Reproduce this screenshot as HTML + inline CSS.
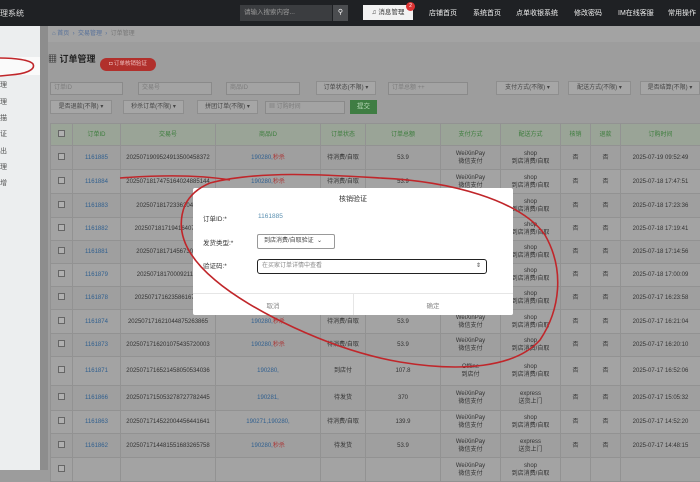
<!DOCTYPE html>
<html><head><meta charset="utf-8"><style>
*{box-sizing:border-box;margin:0;padding:0}
body{width:700px;height:470px;overflow:hidden;position:relative;background:#9c9c9c;font-family:"Liberation Sans","Noto Sans CJK SC",sans-serif;font-size:7px;color:#333}
.top{position:absolute;left:0;top:0;width:700px;height:26px;background:#1f2124;color:#ddd;overflow:hidden}
.top .n{position:absolute;top:8px;font-size:7px;color:#eee;white-space:nowrap}
.abs{position:absolute}
.side{position:absolute;left:0;top:26px;width:40px;height:444px;background:#eceeef}
.side div{position:absolute;left:0;font-size:7px;color:#555}
.main{position:absolute;left:40px;top:26px;width:660px;height:444px;background:#9d9d9d}
.inp{position:absolute;height:13px;border:1px solid #8a8a8a;background:#a3a3a3;color:#7c7c7c;font-size:6px;padding-left:3px;line-height:11px;white-space:nowrap;overflow:hidden}
.sel{position:absolute;height:14px;border:1px solid #8e8e8e;background:#a6a6a6;color:#444;font-size:6px;text-align:center;line-height:12px;white-space:nowrap;overflow:hidden}
table{position:absolute;left:50px;top:123px;border-collapse:collapse;table-layout:fixed;width:650px}
td,th{border:1px solid #929292;text-align:center;font-size:6px;line-height:8px;overflow:hidden;white-space:nowrap;font-weight:normal}
th{background:#9aa497;color:#3c7d3c;height:22px}
tr:nth-child(odd) td{background:#a3a3a3}
tr:nth-child(even) td{background:#9f9f9f}
td{color:#333}
.b{color:#2f5f8f}.r{color:#a33}
.cb{display:inline-block;width:7px;height:7px;border:1px solid #666;background:#b0b0b0}
.modal{position:absolute;left:193px;top:188px;width:320px;height:127px;background:#fff;border-radius:2px}
.modal .l{position:absolute;left:10px;font-size:6.5px;color:#333}
</style></head><body>
<div class="top">
<div class="abs" style="left:0;top:8px;font-size:8px;color:#ddd">理系统</div>
<div class="abs" style="left:240px;top:5px;width:92px;height:16px;background:#3b3d40;color:#999;font-size:6.5px;line-height:16px;padding-left:4px">请输入搜索内容...</div>
<div class="abs" style="left:333px;top:5px;width:15px;height:16px;background:#4b4d50;color:#fff;font-size:7px;line-height:16px;text-align:center">⚲</div>
<div class="abs" style="left:363px;top:5px;width:50px;height:15px;background:#f2f2f2;color:#333;font-size:6.5px;line-height:15px;text-align:center">♫ 消息管理</div>
<div class="abs" style="left:406px;top:2px;width:9px;height:9px;border-radius:50%;background:#d33;color:#fff;font-size:5px;line-height:9px;text-align:center">2</div>
<div class="n" style="left:429px">店铺首页</div>
<div class="n" style="left:473px">系统首页</div>
<div class="n" style="left:516px">点单收银系统</div>
<div class="n" style="left:574px">修改密码</div>
<div class="n" style="left:618px">IM在线客服</div>
<div class="n" style="left:668px">常用操作</div>
</div>
<div class="side">
<div style="top:31px;width:40px;height:18px;background:#fafafa"></div>
<div style="top:54px">理</div><div style="top:71px">理</div><div style="top:87px">描</div><div style="top:103px">证</div><div style="top:120px">出</div><div style="top:136px">理</div><div style="top:152px">增</div>
</div>
<div class="main">
<div class="abs" style="left:0;top:0;width:8px;height:444px;background:#8d8d8d"></div>
<div class="abs" style="left:8px;top:0;width:652px;height:16px;background:#a3a3a3;font-size:6px;color:#56709a;line-height:16px;padding-left:4px">⌂ 首页 &nbsp;›&nbsp; 交易管理 &nbsp;›&nbsp; <span style="color:#777">订单管理</span></div>
<div class="abs" style="left:8px;top:26px;font-size:9px;color:#222;font-weight:bold">▦ 订单管理</div>
<div class="abs" style="left:60px;top:32px;width:56px;height:13px;border-radius:7px;background:#b1302c;color:#f0c0c0;font-size:5.5px;line-height:13px;text-align:center">◘ 订单核销验证</div>
</div>
<div class="inp" style="left:50px;top:82px;width:73px">订单ID</div>
<div class="inp" style="left:138px;top:82px;width:74px">交易号</div>
<div class="inp" style="left:226px;top:82px;width:74px">商品ID</div>
<div class="sel" style="left:316px;top:81px;width:60px">订单状态(不限) ▾</div>
<div class="inp" style="left:388px;top:82px;width:80px">订单总额 ++</div>
<div class="sel" style="left:496px;top:81px;width:63px">支付方式(不限) ▾</div>
<div class="sel" style="left:568px;top:81px;width:63px">配送方式(不限) ▾</div>
<div class="sel" style="left:640px;top:81px;width:60px">是否结算(不限) ▾</div>
<div class="sel" style="left:50px;top:100px;width:62px">是否退款(不限) ▾</div>
<div class="sel" style="left:123px;top:100px;width:61px">秒杀订单(不限) ▾</div>
<div class="sel" style="left:197px;top:100px;width:61px">拼团订单(不限) ▾</div>
<div class="inp" style="left:265px;top:101px;width:80px">▦ 订购时间</div>
<div class="abs" style="left:350px;top:100px;width:27px;height:14px;background:#3f7d43;color:#b7d8b7;font-size:6.5px;line-height:14px;text-align:center">提交</div>
<table>
<colgroup><col style="width:22px"><col style="width:48px"><col style="width:95px"><col style="width:105px"><col style="width:45px"><col style="width:75px"><col style="width:60px"><col style="width:60px"><col style="width:30px"><col style="width:30px"><col style="width:80px"></colgroup>
<tr><th><span class="cb"></span></th><th>订单ID</th><th>交易号</th><th>商品ID</th><th>订单状态</th><th>订单总额</th><th>支付方式</th><th>配送方式</th><th>核销</th><th>退款</th><th>订购时间</th></tr>
<tr style="height:24px"><td><span class="cb"></span></td><td class="b">1161885</td><td>2025071909524913500458372</td><td><span class="b">190280,</span><span class="r">秒杀</span></td><td>待消费/自取</td><td>53.9</td><td>WeiXinPay<br>微信支付</td><td>shop<br>到店消费/自取</td><td>否</td><td>否</td><td>2025-07-19 09:52:49</td></tr>
<tr style="height:24px"><td><span class="cb"></span></td><td class="b">1161884</td><td>2025071817475164024885144</td><td><span class="b">190280,</span><span class="r">秒杀</span></td><td>待消费/自取</td><td>53.9</td><td>WeiXinPay<br>微信支付</td><td>shop<br>到店消费/自取</td><td>否</td><td>否</td><td>2025-07-18 17:47:51</td></tr>
<tr style="height:24px"><td><span class="cb"></span></td><td class="b">1161883</td><td>2025071817233620474</td><td></td><td></td><td></td><td></td><td>shop<br>到店消费/自取</td><td>否</td><td>否</td><td>2025-07-18 17:23:36</td></tr>
<tr style="height:23px"><td><span class="cb"></span></td><td class="b">1161882</td><td>20250718171941640732</td><td></td><td></td><td></td><td></td><td>shop<br>到店消费/自取</td><td>否</td><td>否</td><td>2025-07-18 17:19:41</td></tr>
<tr style="height:23px"><td><span class="cb"></span></td><td class="b">1161881</td><td>2025071817145673058</td><td></td><td></td><td></td><td></td><td>shop<br>到店消费/自取</td><td>否</td><td>否</td><td>2025-07-18 17:14:56</td></tr>
<tr style="height:23px"><td><span class="cb"></span></td><td class="b">1161879</td><td>2025071817000921110</td><td></td><td></td><td></td><td></td><td>shop<br>到店消费/自取</td><td>否</td><td>否</td><td>2025-07-18 17:00:09</td></tr>
<tr style="height:23px"><td><span class="cb"></span></td><td class="b">1161878</td><td>20250717162358616735</td><td></td><td></td><td></td><td></td><td>shop<br>到店消费/自取</td><td>否</td><td>否</td><td>2025-07-17 16:23:58</td></tr>
<tr style="height:24px"><td><span class="cb"></span></td><td class="b">1161874</td><td>2025071716210448752638​65</td><td><span class="b">190280,</span><span class="r">秒杀</span></td><td>待消费/自取</td><td>53.9</td><td>WeiXinPay<br>微信支付</td><td>shop<br>到店消费/自取</td><td>否</td><td>否</td><td>2025-07-17 16:21:04</td></tr>
<tr style="height:23px"><td><span class="cb"></span></td><td class="b">1161873</td><td>2025071716201075435720003</td><td><span class="b">190280,</span><span class="r">秒杀</span></td><td>待消费/自取</td><td>53.9</td><td>WeiXinPay<br>微信支付</td><td>shop<br>到店消费/自取</td><td>否</td><td>否</td><td>2025-07-17 16:20:10</td></tr>
<tr style="height:29px"><td><span class="cb"></span></td><td class="b">1161871</td><td>2025071716521458050534036</td><td class="b">190280,</td><td>到店付</td><td>107.8</td><td>Offline<br>到店付</td><td>shop<br>到店消费/自取</td><td>否</td><td>否</td><td>2025-07-17 16:52:06</td></tr>
<tr style="height:25px"><td><span class="cb"></span></td><td class="b">1161866</td><td>2025071715053278727782445</td><td class="b">190281,</td><td>待发货</td><td>370</td><td>WeiXinPay<br>微信支付</td><td>express<br>送货上门</td><td>否</td><td>否</td><td>2025-07-17 15:05:32</td></tr>
<tr style="height:23px"><td><span class="cb"></span></td><td class="b">1161863</td><td>2025071714522004456441641</td><td class="b">190271,190280,</td><td>待消费/自取</td><td>139.9</td><td>WeiXinPay<br>微信支付</td><td>shop<br>到店消费/自取</td><td>否</td><td>否</td><td>2025-07-17 14:52:20</td></tr>
<tr style="height:24px"><td><span class="cb"></span></td><td class="b">1161862</td><td>2025071714481551683265758</td><td><span class="b">190280,</span><span class="r">秒杀</span></td><td>待发货</td><td>53.9</td><td>WeiXinPay<br>微信支付</td><td>express<br>送货上门</td><td>否</td><td>否</td><td>2025-07-17 14:48:15</td></tr>
<tr style="height:24px"><td><span class="cb"></span></td><td></td><td></td><td></td><td></td><td></td><td>WeiXinPay<br>微信支付</td><td>shop<br>到店消费/自取</td><td></td><td></td><td></td></tr>
</table>
<div class="modal">
<div class="abs" style="left:0;top:6px;width:320px;text-align:center;font-size:7px;color:#333">核销验证</div>
<div class="l" style="top:25px">订单ID:*</div>
<div class="abs" style="left:65px;top:25px;font-size:6.5px;color:#5a8fb0">1161885</div>
<div class="l" style="top:49px">发货类型:*</div>
<div class="abs" style="left:64px;top:46px;width:78px;height:15px;border:1px solid #999;border-radius:2px;font-size:6px;line-height:13px;padding-left:6px;color:#444;white-space:nowrap">到店消费/自取验证 &nbsp;⌄</div>
<div class="l" style="top:72px">验证码:*</div>
<div class="abs" style="left:64px;top:71px;width:230px;height:15px;border:1px solid #222;border-radius:3px;font-size:6px;line-height:13px;padding-left:4px;color:#888">在买家订单详情中查看<span style="position:absolute;right:5px;color:#444">⇕</span></div>
<div class="abs" style="left:0;top:105px;width:320px;border-top:1px solid #e6e6e6"></div>
<div class="abs" style="left:160px;top:105px;height:22px;border-left:1px solid #e6e6e6"></div>
<div class="abs" style="left:0;top:112px;width:160px;text-align:center;font-size:6.5px;color:#888">取消</div>
<div class="abs" style="left:160px;top:112px;width:160px;text-align:center;font-size:6.5px;color:#888">确定</div>
</div>
<svg class="abs" style="left:0;top:0" width="700" height="470" viewBox="0 0 700 470" fill="none" stroke="#c0262a" stroke-width="1.6">
<path d="M210,183 C260,170 330,175 380,178 C450,181 520,200 545,235 C565,270 560,310 540,340 C515,368 460,372 400,362 C330,350 250,310 215,280 C185,255 175,230 185,205 C190,195 198,188 210,183"/>
<path d="M0,58 C15,58 30,60 33,64 C36,70 25,74 10,75 L0,76"/>
<path d="M120,178 C160,175 200,175 230,180"/>
</svg>
</body></html>
